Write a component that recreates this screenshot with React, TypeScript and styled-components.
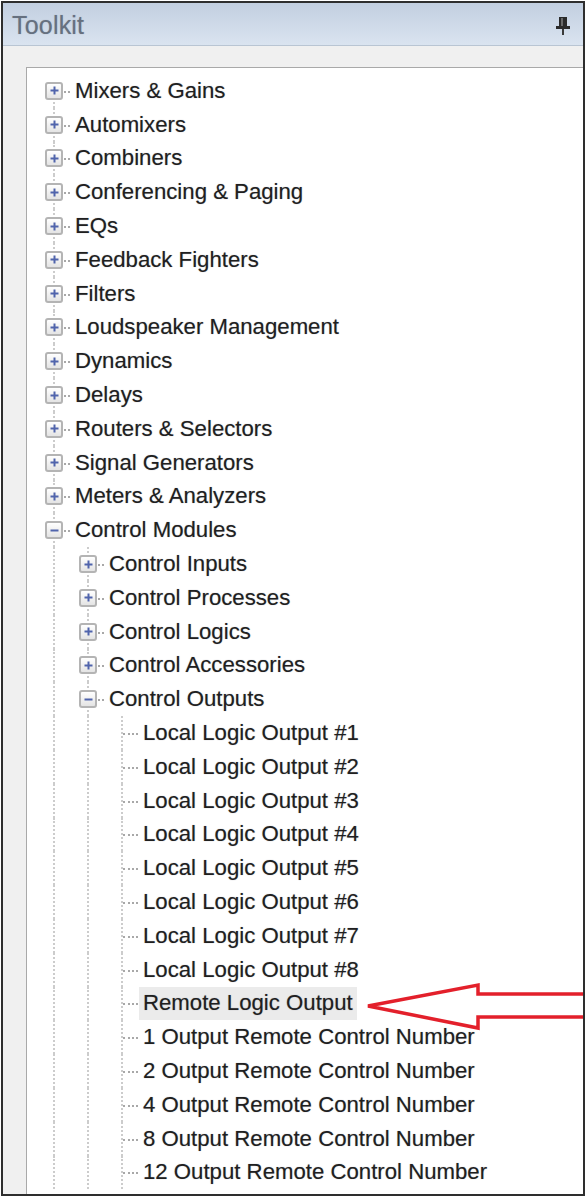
import React from 'react';
import styled, { createGlobalStyle } from 'styled-components';

const GlobalStyle = createGlobalStyle`
  html, body {
    margin: 0;
    padding: 0;
    background: #ffffff;
  }
  body {
    font-family: "Liberation Sans", Arial, sans-serif;
  }
`;

const ROW_H = 33.8;
const INDENT = 34;

type Kind = 'plus' | 'minus' | 'leaf';

interface Row {
  label: string;
  level: number;
  kind: Kind;
  selected?: boolean;
}

const rows: Row[] = [
  { label: 'Mixers & Gains', level: 0, kind: 'plus' },
  { label: 'Automixers', level: 0, kind: 'plus' },
  { label: 'Combiners', level: 0, kind: 'plus' },
  { label: 'Conferencing & Paging', level: 0, kind: 'plus' },
  { label: 'EQs', level: 0, kind: 'plus' },
  { label: 'Feedback Fighters', level: 0, kind: 'plus' },
  { label: 'Filters', level: 0, kind: 'plus' },
  { label: 'Loudspeaker Management', level: 0, kind: 'plus' },
  { label: 'Dynamics', level: 0, kind: 'plus' },
  { label: 'Delays', level: 0, kind: 'plus' },
  { label: 'Routers & Selectors', level: 0, kind: 'plus' },
  { label: 'Signal Generators', level: 0, kind: 'plus' },
  { label: 'Meters & Analyzers', level: 0, kind: 'plus' },
  { label: 'Control Modules', level: 0, kind: 'minus' },
  { label: 'Control Inputs', level: 1, kind: 'plus' },
  { label: 'Control Processes', level: 1, kind: 'plus' },
  { label: 'Control Logics', level: 1, kind: 'plus' },
  { label: 'Control Accessories', level: 1, kind: 'plus' },
  { label: 'Control Outputs', level: 1, kind: 'minus' },
  { label: 'Local Logic Output #1', level: 2, kind: 'leaf' },
  { label: 'Local Logic Output #2', level: 2, kind: 'leaf' },
  { label: 'Local Logic Output #3', level: 2, kind: 'leaf' },
  { label: 'Local Logic Output #4', level: 2, kind: 'leaf' },
  { label: 'Local Logic Output #5', level: 2, kind: 'leaf' },
  { label: 'Local Logic Output #6', level: 2, kind: 'leaf' },
  { label: 'Local Logic Output #7', level: 2, kind: 'leaf' },
  { label: 'Local Logic Output #8', level: 2, kind: 'leaf' },
  { label: 'Remote Logic Output', level: 2, kind: 'leaf', selected: true },
  { label: '1 Output Remote Control Number', level: 2, kind: 'leaf' },
  { label: '2 Output Remote Control Number', level: 2, kind: 'leaf' },
  { label: '4 Output Remote Control Number', level: 2, kind: 'leaf' },
  { label: '8 Output Remote Control Number', level: 2, kind: 'leaf' },
  { label: '12 Output Remote Control Number', level: 2, kind: 'leaf' },
];

const Frame = styled.div`
  position: relative;
  margin: 1px 0 0 1px;
  width: 580px;
  height: 1191px;
  border: 2px solid #2e2e2e;
  display: flex;
  flex-direction: column;
  overflow: hidden;
`;

const Header = styled.div`
  height: 43px;
  flex-shrink: 0;
  display: flex;
  align-items: center;
  justify-content: space-between;
  padding: 3px 12px 0 9px;
  box-sizing: border-box;
  background: linear-gradient(#c2cfe0, #dae4f0);
  border-bottom: 1px solid #b9c5d3;
`;

const Title = styled.span`
  font-size: 25px;
  color: #66707f;
  letter-spacing: 0.2px;
  text-shadow: 0 0 1px rgba(102, 112, 127, 0.5);
`;

const Body = styled.div`
  flex: 1;
  display: flex;
  background: #f0f0f0;
  padding: 21px 0 0 23px;
  min-height: 0;
`;

const TreeBox = styled.div`
  flex: 1;
  background: #ffffff;
  border-top: 1px solid #a9a9a9;
  border-left: 1px solid #a9a9a9;
  padding: 6px 0 0 10px;
  overflow: hidden;
`;

const TreeRow = styled.div`
  display: flex;
  align-items: stretch;
  height: ${ROW_H}px;
`;

const Guide = styled.div<{ $line: boolean }>`
  position: relative;
  width: ${INDENT}px;
  flex-shrink: 0;
  &::before {
    content: '';
    display: ${(p) => (p.$line ? 'block' : 'none')};
    position: absolute;
    left: 16px;
    top: 0;
    bottom: 0;
    border-left: 2px dotted #cccccc;
  }
`;

const Connector = styled.div<{ $first: boolean }>`
  position: relative;
  width: ${INDENT}px;
  flex-shrink: 0;
  &::before {
    content: '';
    position: absolute;
    left: 16px;
    top: ${(p) => (p.$first ? '50%' : '0')};
    bottom: 0;
    border-left: 2px dotted #cccccc;
  }
  &::after {
    content: '';
    position: absolute;
    left: 18px;
    right: 1px;
    top: 50%;
    border-top: 2px dotted #a8a8a8;
  }
`;

const Expander = styled.div`
  position: absolute;
  z-index: 1;
  left: 8px;
  top: 50%;
  width: 14px;
  height: 14px;
  margin-top: -9px;
  border: 2px solid #b4b4b4;
  border-radius: 3px;
  background: linear-gradient(#ffffff, #e4e4e4);
  display: flex;
  align-items: center;
  justify-content: center;
`;

const Label = styled.div<{ $selected?: boolean }>`
  display: flex;
  align-items: center;
  padding: 0 4px;
  font-size: 22.2px;
  color: #1f1f1f;
  white-space: nowrap;
  text-shadow: 0 0 1px rgba(40, 40, 60, 0.45);
  background: ${(p) => (p.$selected ? '#ebebeb' : 'transparent')};
`;

const Overlay = styled.svg`
  position: absolute;
  left: -3px;
  top: -3px;
  pointer-events: none;
  z-index: 5;
`;

const PinIcon = () => (
  <svg width="16" height="20" viewBox="0 0 16 20">
    <rect x="4" y="1" width="8" height="10" fill="#2b2b2b" />
    <rect x="6" y="2" width="2" height="8" fill="#6a6a6a" />
    <rect x="1" y="10" width="14" height="3" fill="#2b2b2b" />
    <rect x="7" y="13" width="2" height="6" fill="#3a3a3a" />
  </svg>
);

const Sign = ({ open }: { open: boolean }) => (
  <svg width="9" height="9" viewBox="0 0 9 9">
    <rect x="0.5" y="3.5" width="8" height="2" fill="#5064ac" />
    {!open && <rect x="3.5" y="0.5" width="2" height="8" fill="#5064ac" />}
  </svg>
);

const TreeLine = ({ row, index }: { row: Row; index: number }) => (
  <TreeRow>
    {Array.from({ length: row.level }).map((_, i) => (
      <Guide key={i} $line />
    ))}
    <Connector $first={index === 0}>
      {row.kind !== 'leaf' && (
        <Expander>
          <Sign open={row.kind === 'minus'} />
        </Expander>
      )}
    </Connector>
    <Label $selected={row.selected}>{row.label}</Label>
  </TreeRow>
);

const App: React.FC = () => {
  return (
    <>
      <GlobalStyle />
      <Frame>
        <Header>
          <Title>Toolkit</Title>
          <PinIcon />
        </Header>
        <Body>
          <TreeBox>
            {rows.map((row, i) => (
              <TreeLine key={row.label} row={row} index={i} />
            ))}
          </TreeBox>
        </Body>
        <Overlay width="590" height="1200" viewBox="0 0 590 1200">
          <polygon
            points="368,1006 478,985 478,994 600,994 600,1017 478,1017 478,1028"
            fill="none"
            stroke="#e3202b"
            strokeWidth="3.5"
            strokeLinejoin="miter"
          />
        </Overlay>
      </Frame>
    </>
  );
};

export default App;
